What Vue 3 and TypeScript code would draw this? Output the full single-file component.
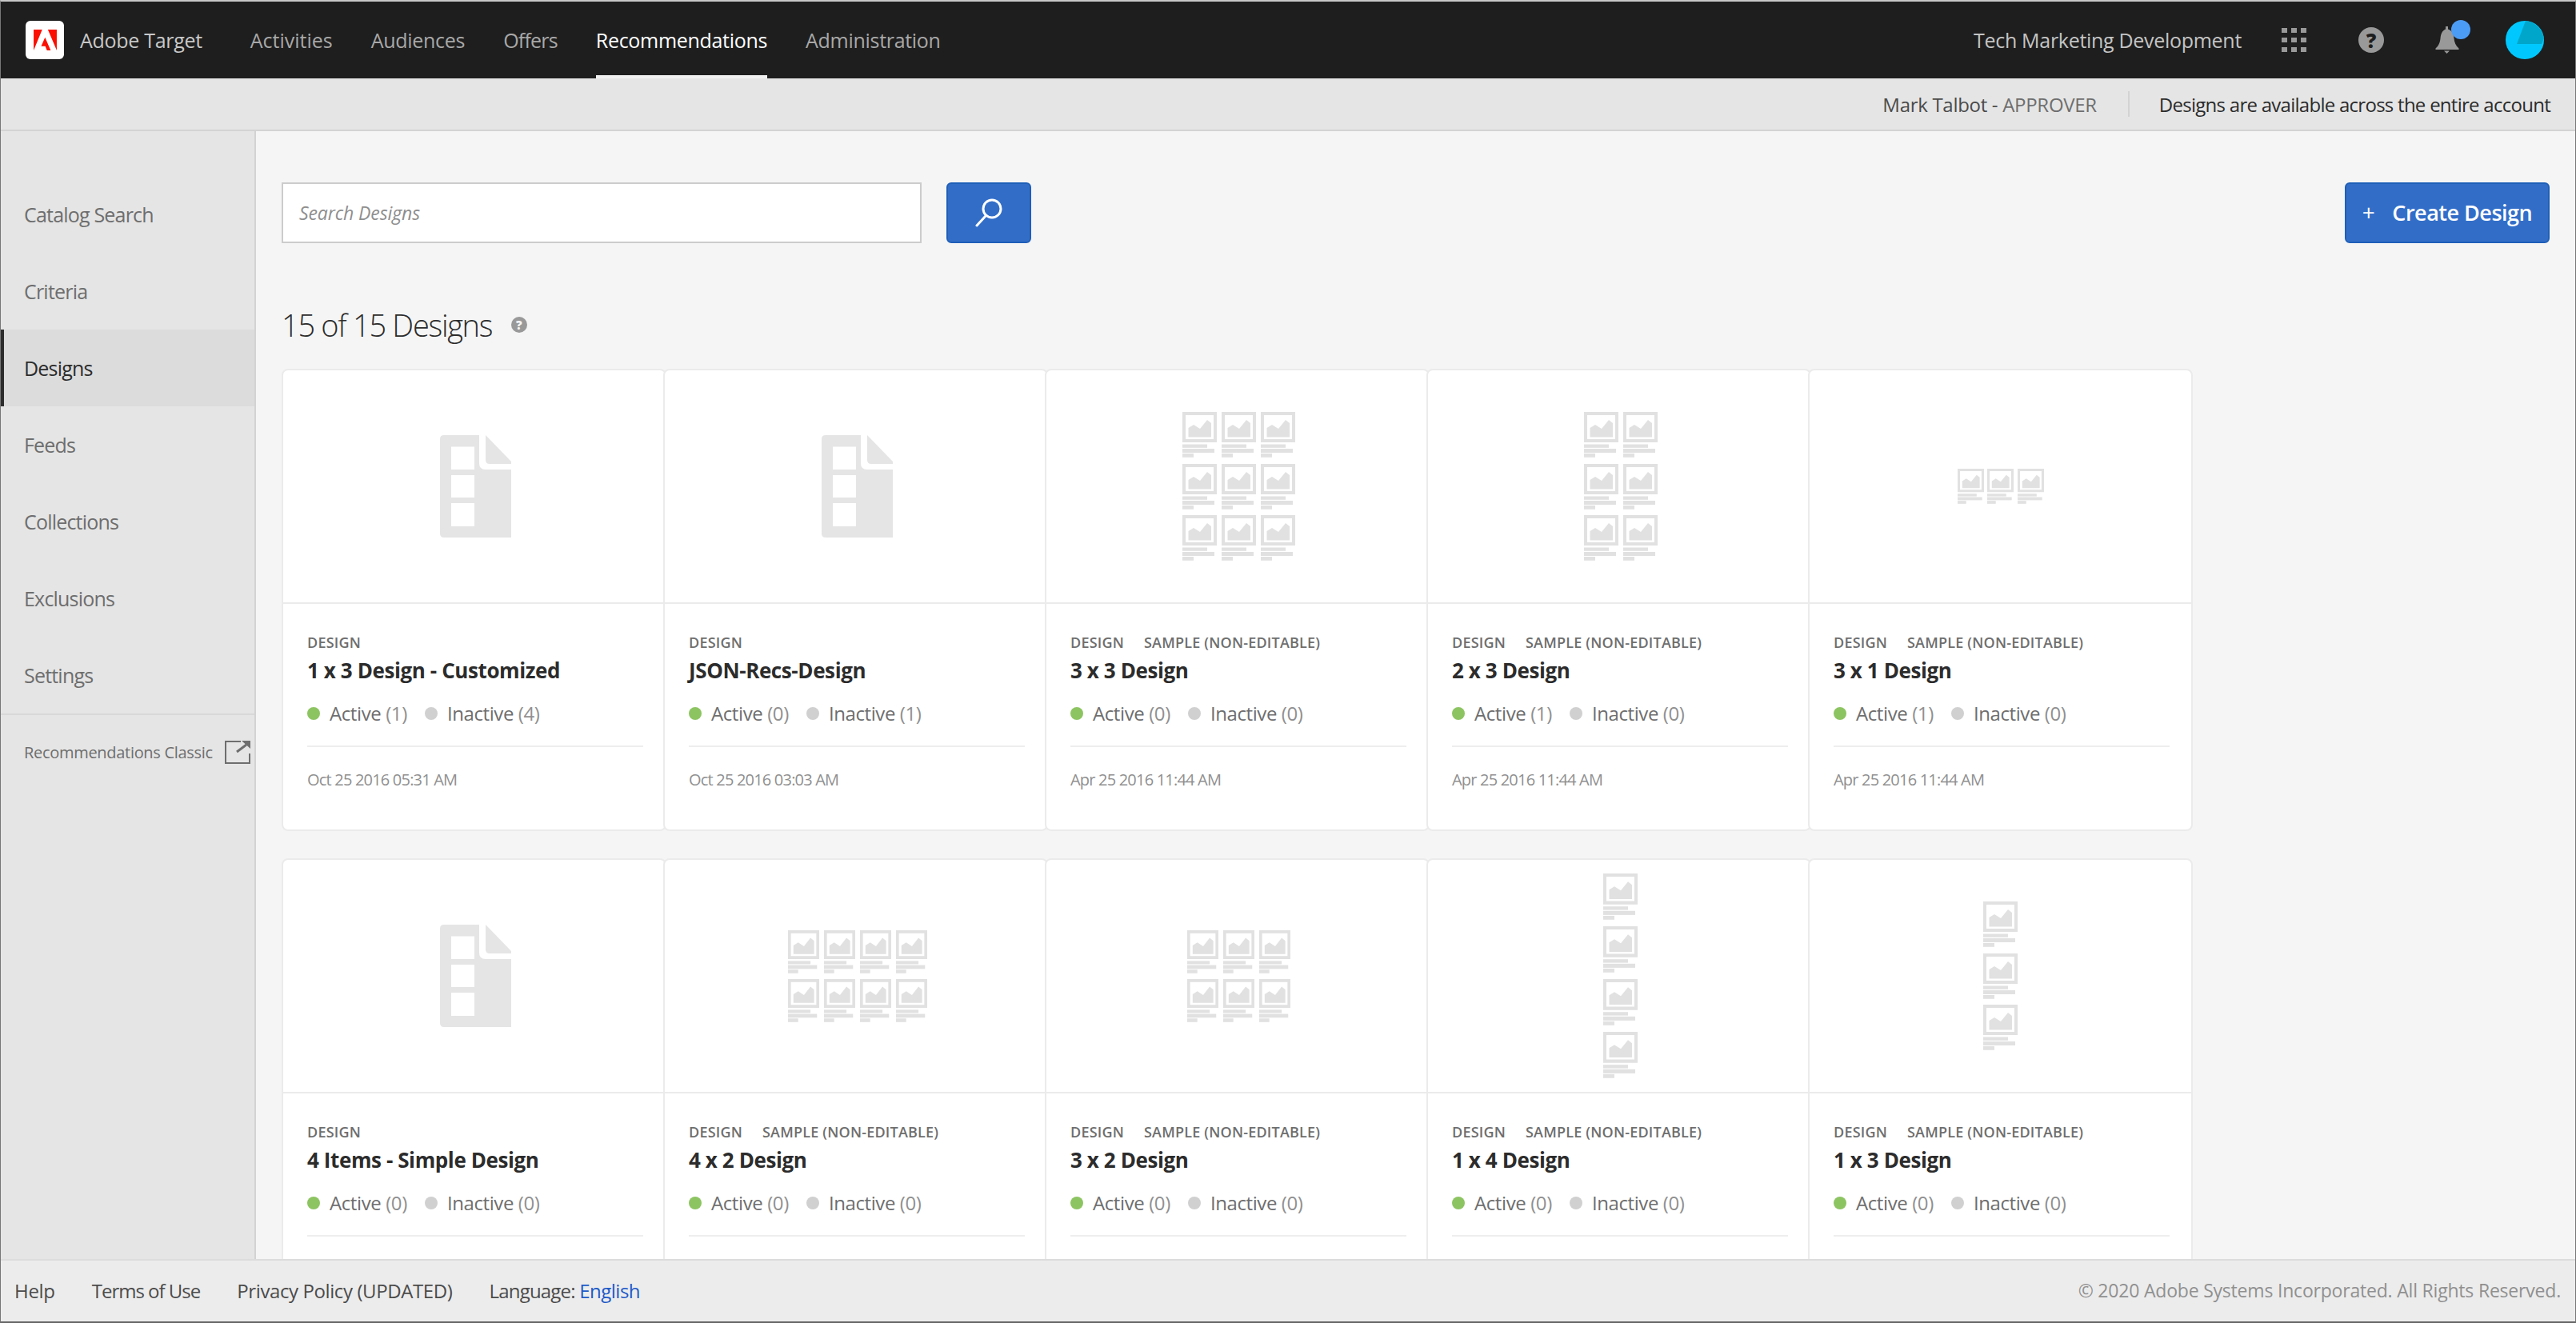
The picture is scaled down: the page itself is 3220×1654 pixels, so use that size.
<script setup lang="ts">
type Layout = { cols: number; rows: number; w: number; h: number; gx: number; gy: number } | null
interface Design {
  title: string
  sample: boolean
  active: number
  inactive: number
  date?: string
  layout: Layout
}
const std = (cols: number, rows: number): Layout => ({ cols, rows, w: 43, h: 57, gx: 6, gy: 7.5 })
const mid = (cols: number, rows: number): Layout => ({ cols, rows, w: 39, h: 54, gx: 6, gy: 7 })
const designs: Design[] = [
  { title: '1 x 3 Design - Customized', sample: false, active: 1, inactive: 4, date: 'Oct 25 2016 05:31 AM', layout: null },
  { title: 'JSON-Recs-Design', sample: false, active: 0, inactive: 1, date: 'Oct 25 2016 03:03 AM', layout: null },
  { title: '3 x 3 Design', sample: true, active: 0, inactive: 0, date: 'Apr 25 2016 11:44 AM', layout: std(3, 3) },
  { title: '2 x 3 Design', sample: true, active: 1, inactive: 0, date: 'Apr 25 2016 11:44 AM', layout: std(2, 3) },
  { title: '3 x 1 Design', sample: true, active: 1, inactive: 0, date: 'Apr 25 2016 11:44 AM', layout: { cols: 3, rows: 1, w: 33, h: 44, gx: 4.5, gy: 0 } },
  { title: '4 Items - Simple Design', sample: false, active: 0, inactive: 0, layout: null },
  { title: '4 x 2 Design', sample: true, active: 0, inactive: 0, layout: mid(4, 2) },
  { title: '3 x 2 Design', sample: true, active: 0, inactive: 0, layout: mid(3, 2) },
  { title: '1 x 4 Design', sample: true, active: 0, inactive: 0, layout: { cols: 1, rows: 4, w: 43, h: 58, gx: 0, gy: 8 } },
  { title: '1 x 3 Design', sample: true, active: 0, inactive: 0, layout: std(1, 3) },
]
const nav = ['Activities', 'Audiences', 'Offers', 'Recommendations', 'Administration']
const side = ['Catalog Search', 'Criteria', 'Designs', 'Feeds', 'Collections', 'Exclusions', 'Settings']
const gridStyle = (l: NonNullable<Layout>) => ({
  gridTemplateColumns: `repeat(${l.cols}, ${l.w}px)`,
  columnGap: `${l.gx}px`,
  rowGap: `${l.gy}px`,
})
</script>

<template>
  <div class="app">
    <header class="top">
      <div class="logo">
        <svg viewBox="0 0 30 27" width="29" height="26"><path fill="#fa0f00" d="M18.5 0H30v27zM11.1 0H0v27zM14.8 10l7.3 17h-4.8l-2.2-5.4H9.8z" /></svg>
      </div>
      <span class="brand">Adobe Target</span>
      <nav class="nav">
        <a v-for="n in nav" :key="n" class="nav-item" :class="{ on: n === 'Recommendations' }">{{ n }}</a>
      </nav>
      <span class="org">Tech Marketing Development</span>
      <svg class="apps" viewBox="0 0 31 30" width="31" height="30">
        <g fill="#999">
          <rect x="0" y="0" width="7" height="6" /><rect x="12" y="0" width="7" height="6" /><rect x="24" y="0" width="7" height="6" />
          <rect x="0" y="12" width="7" height="6" /><rect x="12" y="12" width="7" height="6" /><rect x="24" y="12" width="7" height="6" />
          <rect x="0" y="24" width="7" height="6" /><rect x="12" y="24" width="7" height="6" /><rect x="24" y="24" width="7" height="6" />
        </g>
      </svg>
      <span class="help">?</span>
      <div class="bell">
        <svg viewBox="0 0 30 34" width="30" height="34"><path fill="#999" d="M13 0h3v3.500c5 1.500 7 6 7.500 11.500.5 5 2 9 6 12.500v1.500H.5v-1.500c4-3.500 5.500-7.500 6-12.500C7 9.500 9 5 13 3.500zM11 30.500h7l-3.500 3.500z" /></svg>
        <span class="badge"></span>
      </div>
      <svg class="avatar" viewBox="0 0 48 48" width="48" height="48">
        <circle cx="24" cy="24" r="24" fill="#00c8ff" />
        <path fill="#00a6c9" d="M14 29 25 0 C36 1 46 10 48 22 L45 29z" />
      </svg>
    </header>

    <div class="sub">
      <span class="user">Mark Talbot - <em>APPROVER</em></span>
      <span class="sep"></span>
      <span class="scope">Designs are available across the entire account</span>
    </div>

    <div class="mid">
      <aside class="side">
        <a v-for="s in side" :key="s" class="side-item" :class="{ on: s === 'Designs' }">{{ s }}</a>
        <div class="classic">
          <span>Recommendations Classic</span>
          <svg viewBox="0 0 32 30" width="32" height="30" fill="none">
            <path stroke="#6e6e6e" stroke-width="2" d="M20 2H1v27h30V17" />
            <path stroke="#6e6e6e" stroke-width="3" d="M15 15 27 6" />
            <path fill="#6e6e6e" d="M21 1h11v10z" />
          </svg>
        </div>
      </aside>

      <main class="main">
        <div class="toolbar">
          <div class="search">Search Designs</div>
          <button class="btn search-btn" aria-label="Search">
            <svg viewBox="0 0 34 36" width="34" height="36" fill="none" stroke="#fff" stroke-width="3">
              <circle cx="21" cy="13" r="11" />
              <path d="M13 22 2 34" stroke-linecap="round" />
            </svg>
          </button>
          <button class="btn create"><span class="plus">+</span><span class="create-text">Create Design</span></button>
        </div>

        <h1 class="heading">15 of 15 Designs <span class="q">?</span></h1>

        <div class="cards">
          <article v-for="d in designs" :key="d.title + d.active + d.inactive" class="card">
            <div class="thumb">
              <svg v-if="!d.layout" viewBox="0 0 89 128" width="89" height="128">
                <path fill="#e5e5e5" d="M5 0H49V35Q49 43 57 43H89V128H5Q0 128 0 123V5Q0 0 5 0ZM14 14.500V43H43V14.500ZM14 50V78H43V50ZM14 85V114H43V85Z" fill-rule="evenodd" />
                <path fill="#e5e5e5" d="M57 0 89 33V36H62Q57 36 57 31Z" />
              </svg>
              <div v-else class="tiles" :style="gridStyle(d.layout)">
                <svg
                  v-for="i in d.layout.cols * d.layout.rows"
                  :key="i"
                  viewBox="0 0 43 57"
                  :width="d.layout.w"
                  :height="d.layout.h"
                  preserveAspectRatio="none"
                >
                  <g fill="#e1e1e1">
                    <path fill-rule="evenodd" d="M0 0H43V38H0ZM4 4V34H39V4Z" />
                    <path d="M7.500 20 14 16 22 21 31 10 36 14V31.500H7.500Z" />
                    <rect y="40.500" width="31" height="4.300" />
                    <rect y="46" width="40" height="5" />
                    <rect y="52" width="14" height="4.800" />
                  </g>
                </svg>
              </div>
            </div>
            <div class="info">
              <div class="labels">
                <span>DESIGN</span>
                <span v-if="d.sample">SAMPLE (NON-EDITABLE)</span>
              </div>
              <div class="title">{{ d.title }}</div>
              <div class="status">
                <i class="dot green"></i>
                <span>Active <b>({{ d.active }})</b></span>
                <i class="dot grey"></i>
                <span>Inactive <b>({{ d.inactive }})</b></span>
              </div>
              <div v-if="d.date" class="date">{{ d.date }}</div>
            </div>
          </article>
        </div>
      </main>
    </div>

    <footer class="foot">
      <a>Help</a>
      <a class="terms">Terms of Use</a>
      <a class="privacy">Privacy Policy (UPDATED)</a>
      <span class="language">Language: <a class="lang">English</a></span>
      <span class="copy">© 2020 Adobe Systems Incorporated. All Rights Reserved.</span>
    </footer>
  </div>
</template>

<style>
html, body { margin: 0; padding: 0; overflow: hidden; background: #f5f5f5; }
</style>

<style scoped>
.app {
  width: 3220px;
  height: 1654px;
  box-sizing: border-box;
  border-top: 2px solid #c8c8c8;
  border-left: 1px solid #777;
  border-right: 1px solid #777;
  border-bottom: 2px solid #666;
  display: flex;
  flex-direction: column;
  overflow: hidden;
  font-family: "Open Sans", "Liberation Sans", sans-serif;
  color: #6e6e6e;
  background: #f5f5f5;
}
.top {
  flex: 0 0 96px;
  background: #1e1e1e;
  display: flex;
  align-items: center;
  font-size: 25px;
  letter-spacing: -0.3px;
  padding-right: 39px;
}
.logo {
  width: 48px;
  height: 48px;
  margin-left: 31px;
  background: #fff;
  border-radius: 6px;
  display: flex;
  align-items: center;
  justify-content: center;
}
.brand { margin-left: 20px; color: #c8c8c8; }
.nav { display: flex; gap: 48px; margin-left: 60px; height: 100%; }
.nav-item {
  display: flex;
  align-items: center;
  color: #a8a8a8;
  border-bottom: 4px solid transparent;
  border-top: 4px solid transparent;
}
.nav-item:first-child { letter-spacing: 0; }
.nav-item:nth-child(3) { letter-spacing: -0.8px; }
.nav-item.on { color: #fff; border-bottom-color: #f0f0f0; }
.org { margin-left: auto; color: #c4c4c4; }
.apps { margin-left: 50px; }
.help {
  margin-left: 65px;
  width: 32px;
  height: 32px;
  border-radius: 50%;
  background: #999;
  color: #1e1e1e;
  font-weight: 800;
  font-size: 25px;
  line-height: 32px;
  text-align: center;
  letter-spacing: 0;
}
.bell { position: relative; margin-left: 64px; height: 34px; }
.badge {
  position: absolute;
  left: 20px;
  top: -8px;
  width: 24px;
  height: 24px;
  border-radius: 50%;
  background: #4b9cf5;
}
.avatar { margin-left: 58px; }

.sub {
  flex: 0 0 66px;
  box-sizing: border-box;
  background: #e5e5e5;
  border-bottom: 2px solid #d3d3d3;
  display: flex;
  align-items: center;
  justify-content: flex-end;
  padding-right: 31px;
  font-size: 24px;
  letter-spacing: -0.3px;
}
.user { color: #4b4b4b; }
.user em { font-style: normal; color: #6e6e6e; }
.sep { width: 2px; height: 32px; background: #d3d3d3; margin: 0 37px 0 39px; }
.scope { color: #2c2c2c; letter-spacing: -0.73px; }

.mid { flex: 1; min-height: 0; display: flex; }
.side {
  flex: 0 0 319px;
  box-sizing: border-box;
  background: #e5e5e5;
  border-right: 2px solid #d3d3d3;
  padding-top: 56px;
}
.side-item {
  display: flex;
  align-items: center;
  height: 96px;
  padding-left: 29px;
  font-size: 25px;
  letter-spacing: -0.8px;
  color: #6e6e6e;
  box-sizing: border-box;
}
.side-item.on {
  background: #dcdcdc;
  color: #2c2c2c;
  box-shadow: inset 4px 0 0 #2c2c2c;
}
.classic {
  border-top: 2px solid #d8d8d8;
  display: flex;
  align-items: center;
  justify-content: space-between;
  padding: 31px 5px 0 29px;
  font-size: 20px;
  letter-spacing: -0.3px;
  color: #6e6e6e;
}
.main { flex: 1; min-width: 0; overflow: hidden; padding: 64px 32px 0 32px; box-sizing: border-box; }
.toolbar { display: flex; align-items: stretch; height: 76px; }
.search {
  width: 800px;
  box-sizing: border-box;
  background: #fff;
  border: 2px solid #ccc;
  padding-left: 20px;
  display: flex;
  align-items: center;
  font-style: italic;
  font-size: 23px;
  letter-spacing: -0.1px;
  color: #8e8e8e;
}
.btn {
  box-sizing: border-box;
  border: 2px solid #1f5fb8;
  background: #326ec8;
  border-radius: 6px;
  color: #fff;
  font-family: inherit;
  padding: 0;
  display: flex;
  align-items: center;
  justify-content: center;
}
.search-btn { width: 106px; margin-left: 31px; }
.create {
  width: 256px;
  margin-left: auto;
  padding-bottom: 2px;
  font-size: 27px;
  font-weight: 600;
  letter-spacing: -0.5px;
}
.plus { font-weight: 400; font-size: 28px; margin-right: 22px; }
.heading {
  margin: 72px 0 0;
  height: 60px;
  line-height: 60px;
  font-size: 38px;
  font-weight: 300;
  letter-spacing: -1.3px;
  color: #2c2c2c;
  display: flex;
  align-items: center;
  white-space: pre;
}
.q {
  margin-left: 15px;
  width: 20px;
  height: 20px;
  border-radius: 50%;
  background: #999;
  color: #f5f5f5;
  font-size: 15px;
  font-weight: 800;
  line-height: 20px;
  text-align: center;
  letter-spacing: 0;
}
.cards {
  margin-top: 25px;
  display: grid;
  grid-template-columns: repeat(5, 477px);
  row-gap: 34px;
}
.card {
  width: 481px;
  height: 578px;
  box-sizing: border-box;
  background: #fff;
  border: 2px solid #ebebeb;
  border-radius: 8px;
}
.thumb {
  height: 292px;
  box-sizing: border-box;
  border-bottom: 2px solid #ebebeb;
  display: flex;
  align-items: center;
  justify-content: center;
  padding-left: 4px;
}
.card:nth-child(5n) .thumb { padding-left: 0; }
.tiles { display: grid; filter: blur(0.5px); }
.tiles svg { display: block; }
.info { padding: 36px 27px 0 30px; }
.labels {
  display: flex;
  gap: 25px;
  font-size: 18px;
  line-height: 24px;
  font-weight: 600;
  letter-spacing: 0.2px;
  color: #6e6e6e;
}
.title {
  margin-top: 5px;
  font-size: 26px;
  line-height: 36px;
  font-weight: 700;
  letter-spacing: -0.4px;
  color: #2c2c2c;
}
.status {
  margin-top: 20px;
  padding-bottom: 24px;
  border-bottom: 2px solid #eee;
  display: flex;
  align-items: center;
  font-size: 24px;
  line-height: 32px;
  letter-spacing: -0.4px;
  color: #6e6e6e;
}
.status b { font-weight: 400; color: #909090; }
.dot { width: 16px; height: 16px; border-radius: 50%; margin-right: 12px; }
.green { background: #8dc462; }
.grey { background: #d0d0d0; margin-left: 22px; }
.date {
  margin-top: 26px;
  font-size: 20px;
  line-height: 30px;
  letter-spacing: -0.8px;
  color: #909090;
}
.foot {
  flex: 0 0 78px;
  box-sizing: border-box;
  background: #ececec;
  border-top: 2px solid #dcdcdc;
  position: relative;
  z-index: 1;
  display: flex;
  align-items: center;
  gap: 46px;
  padding: 0 18px 2px 17px;
  font-size: 24px;
  letter-spacing: -0.3px;
  color: #4b4b4b;
}
.terms { letter-spacing: -1px; }
.privacy { letter-spacing: -0.4px; }
.language { letter-spacing: -0.8px; }
.lang { color: #1e5ac8; letter-spacing: -0.5px; }
.copy { margin-left: auto; color: #909090; font-size: 23px; letter-spacing: -0.2px; }
</style>
